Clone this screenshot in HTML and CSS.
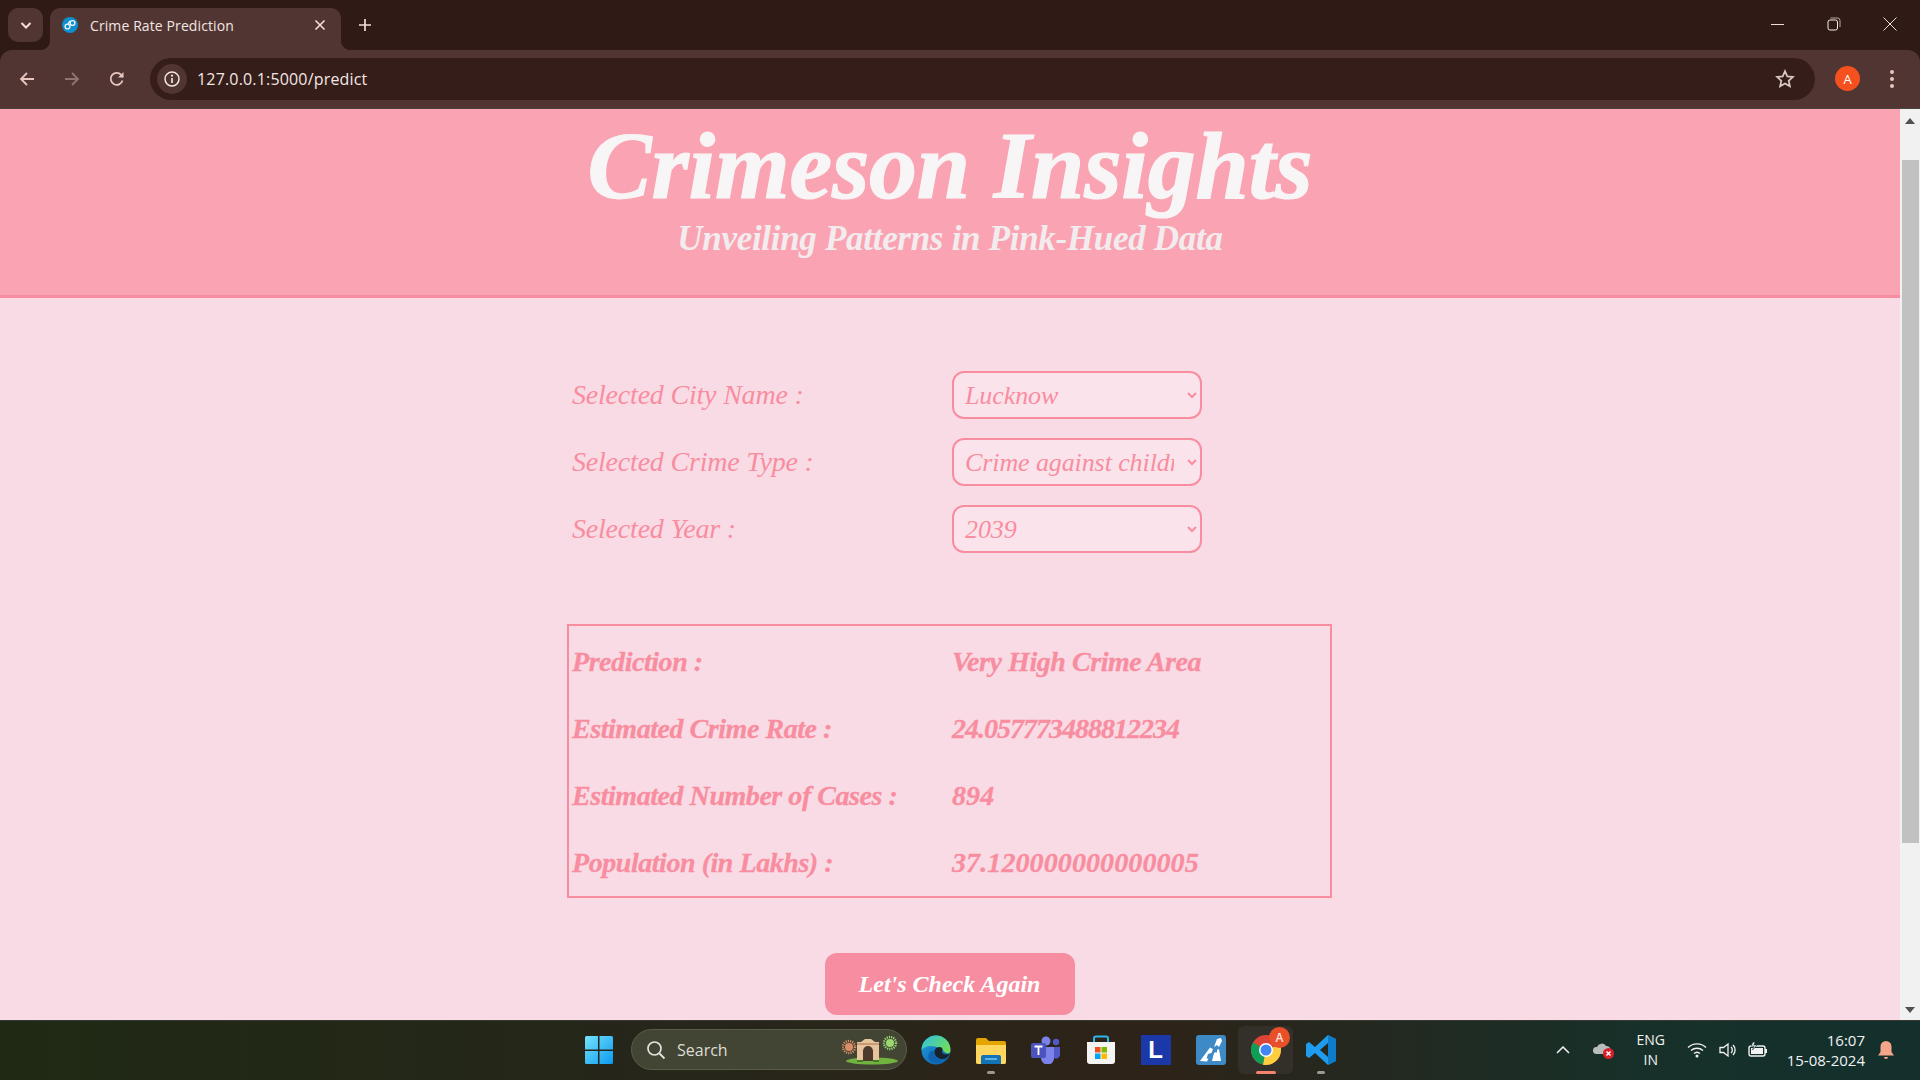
FILE: index.html
```html
<!DOCTYPE html>
<html lang="en">
<head>
    <meta charset="UTF-8">
    <meta name="viewport" content="width=device-width, initial-scale=1.0">
    <title>Crime Rate Prediction</title>
    <link rel="stylesheet" href="styles.css">
</head>
<body>
    <!-- browser tabs -->
    <div class="tabbar">
        <div class="tab-search">
            <svg width="14" height="14" viewBox="0 0 14 14"><path d="M2.5 5l4.5 4.5L11.5 5" fill="none" stroke="#f3dedb" stroke-width="2"/></svg>
        </div>
        <div class="tab">
            <svg class="favicon" width="16" height="16" viewBox="0 0 16 16">
                <circle cx="8" cy="8" r="8" fill="#0d8fd0"/>
                <circle cx="5.5" cy="9.5" r="2.4" fill="none" stroke="#e8f4fa" stroke-width="1.4"/>
                <circle cx="10.5" cy="6" r="2.4" fill="none" stroke="#e8f4fa" stroke-width="1.4"/>
                <path d="M6 7l2-3" stroke="#e8f4fa" stroke-width="1.4"/>
            </svg>
            <span class="tab-title">Crime Rate Prediction</span>
            <svg class="tab-close" width="12" height="12" viewBox="0 0 12 12"><path d="M1.5 1.5l9 9M10.5 1.5l-9 9" stroke="#f3dedb" stroke-width="1.6"/></svg>
        </div>
        <svg class="new-tab" width="14" height="14" viewBox="0 0 14 14"><path d="M7 1v12M1 7h12" stroke="#f3dedb" stroke-width="1.7"/></svg>
        <div class="win-controls">
            <svg width="14" height="14" viewBox="0 0 14 14"><path d="M0 7.5h13" stroke="#eadedc" stroke-width="1"/></svg>
            <svg width="14" height="14" viewBox="0 0 14 14"><rect x="1" y="3" width="9.5" height="10" rx="2" fill="none" stroke="#f3ecea" stroke-width="1"/><path d="M3.5 1h7a2.5 2.5 0 0 1 2.5 2.5V10" fill="none" stroke="#b9aaa8" stroke-width="1"/></svg>
            <svg width="14" height="14" viewBox="0 0 14 14"><path d="M.5.5l13 13M13.5.5l-13 13" stroke="#eadedc" stroke-width="1"/></svg>
        </div>
    </div>

    <!-- address bar -->
    <div class="toolbar">
        <div class="nav-buttons">
            <svg width="18" height="18" viewBox="0 0 18 18"><path d="M16 9H3M9 3L3 9l6 6" fill="none" stroke="#e9c5bf" stroke-width="1.8"/></svg>
            <svg width="18" height="18" viewBox="0 0 18 18"><path d="M2 9h13M9 3l6 6-6 6" fill="none" stroke="#8f7571" stroke-width="1.8"/></svg>
            <svg width="18" height="18" viewBox="0 0 18 18"><path d="M14.5 10.5A6 6 0 1 1 13 4.6L15 7" fill="none" stroke="#e9c5bf" stroke-width="1.8"/><path d="M15.5 2v5.5H10z" fill="#e9c5bf"/></svg>
        </div>
        <div class="omnibox">
            <div class="site-info">
                <svg width="16" height="16" viewBox="0 0 16 16"><circle cx="8" cy="8" r="7" fill="none" stroke="#f3e6e3" stroke-width="1.5"/><path d="M8 7v5" stroke="#f3e6e3" stroke-width="1.7"/><circle cx="8" cy="4.7" r="1.1" fill="#f3e6e3"/></svg>
            </div>
            <span class="url">127.0.0.1:5000/predict</span>
            <svg class="star" width="20" height="20" viewBox="0 0 20 20"><path d="M10 2.2l2.3 5.2 5.6.6-4.2 3.8 1.2 5.5L10 14.5l-4.9 2.8 1.2-5.5L2.100 8l5.600-.6z" fill="none" stroke="#dcc8c4" stroke-width="1.700"/></svg>
        </div>
        <div class="avatar">A</div>
        <div class="menu-dots"><i></i><i></i><i></i></div>
    </div>

    <!-- page -->
    <div class="viewport">
        <div class="page">
            <header class="site-header">
                <h1>Crimeson Insights</h1>
                <p>Unveiling Patterns in Pink-Hued Data</p>
            </header>
            <main class="container">
                <form class="selected-form">
                    <label>Selected City Name :</label>
                    <select><option>Lucknow</option></select>
                    <label>Selected Crime Type :</label>
                    <select><option>Crime against children</option></select>
                    <label>Selected Year :</label>
                    <select><option>2039</option></select>
                </form>
                <div class="result-box">
                    <span>Prediction :</span><span>Very High Crime Area</span>
                    <span>Estimated Crime Rate :</span><span class="val-rate">24.057773488812234</span>
                    <span>Estimated Number of Cases :</span><span class="val-plain">894</span>
                    <span>Population (in Lakhs) :</span><span class="val-plain">37.120000000000005</span>
                </div>
                <div class="actions">
                    <button type="button" class="again-btn">Let's Check Again</button>
                </div>
            </main>
        </div>
        <div class="scrollbar">
            <svg width="10" height="6" viewBox="0 0 10 6"><path d="M5 0l5 6H0z" fill="#505050"/></svg>
            <div class="scroll-track"><div class="scroll-thumb"></div></div>
            <svg width="10" height="6" viewBox="0 0 10 6"><path d="M5 6l5-6H0z" fill="#505050"/></svg>
        </div>
    </div>

    <!-- windows taskbar -->
    <footer class="taskbar">
        <div class="task-center">
            <svg class="start" width="30" height="30" viewBox="0 0 30 30">
                <defs><linearGradient id="winG" x1="0" y1="0" x2="1" y2="1"><stop offset="0" stop-color="#76e3fb"/><stop offset="1" stop-color="#0a9af0"/></linearGradient></defs>
                <path d="M1 2.500A1.500 1.500 0 0 1 2.500 1H14v13.500H1zM15.500 1H27.500A1.500 1.500 0 0 1 29 2.500V14.500H15.500zM1 16H14v13H2.500A1.500 1.500 0 0 1 1 27.500zM15.500 16H29v11.500a1.500 1.500 0 0 1-1.500 1.500H15.500z" fill="url(#winG)"/>
            </svg>
            <div class="search-pill">
                <svg width="20" height="20" viewBox="0 0 20 20"><circle cx="8.500" cy="8.500" r="6.500" fill="none" stroke="#e4e4de" stroke-width="1.700"/><path d="M13.500 13.500l5 5" stroke="#e4e4de" stroke-width="1.800"/></svg>
                <span>Search</span>
                <svg class="gate" width="56" height="32" viewBox="0 0 56 32">
                    <ellipse cx="30" cy="27" rx="26" ry="3.500" fill="#72b23e"/>
                    <circle cx="7" cy="13" r="4" fill="#d88e66"/>
                    <circle cx="7" cy="13" r="6" fill="none" stroke="#d88e66" stroke-width="2.400" stroke-dasharray="1.200 1"/>
                    <circle cx="48" cy="9" r="4" fill="#9bd873"/>
                    <circle cx="48" cy="9" r="6" fill="none" stroke="#9bd873" stroke-width="2.400" stroke-dasharray="1.200 1"/>
                    <path d="M15 8h4l4-3h6l4 3h4v19H15z" fill="#e8c49c"/>
                    <path d="M21 27V17a5 5 0 0 1 10 0v10z" fill="#4c3a2c"/>
                    <path d="M15 9h22v2H15z" fill="#c99b72"/>
                    <path d="M15 26h6v2h-6zM31 26h6v2h-6z" fill="#3f7f2a"/>
                </svg>
            </div>
            <div class="task-icon">
                <svg width="30" height="30" viewBox="0 0 30 30">
                    <defs>
                        <linearGradient id="edgeG" x1="0" y1="0" x2="1" y2="1"><stop offset="0" stop-color="#1f9fe0"/><stop offset="1" stop-color="#0c5aa6"/></linearGradient>
                        <linearGradient id="edgeT" x1="0" y1="0" x2="1" y2=".6"><stop offset="0" stop-color="#2cc0e8"/><stop offset="1" stop-color="#6fdc5c"/></linearGradient>
                    </defs>
                    <circle cx="15" cy="15" r="14.500" fill="url(#edgeG)"/>
                    <path d="M.5 15A14.500 14.500 0 0 1 29.500 15c0 2-.8 3.500-2.500 3.500-3 0-5-4-8.500-5.500C12 10 5 10 .5 15z" fill="url(#edgeT)"/>
                    <path d="M29 18c-2 2-5 1.500-7 .5-1-.5-1.500-2-.5-3 .5-1.500-.5-3.500-3-3.500-3.500 0-5.500 3-5 6 .5 3.500 4 6 8 6 3 0 6-2 7.500-6z" fill="#19222a"/>
                    <path d="M13 17c-.5 4 4 8 8.500 7.500-2 2.500-6 4-10 3C7 26 6 21 9 17c1-1.500 3.500-2 4 0z" fill="#0d63b0"/>
                </svg>
            </div>
            <div class="task-icon running">
                <svg width="30" height="28" viewBox="0 0 30 28">
                    <path d="M0 4a2 2 0 0 1 2-2h8l3 3h15a2 2 0 0 1 2 2v19a2 2 0 0 1-2 2H2a2 2 0 0 1-2-2z" fill="#e5a500"/>
                    <path d="M0 9h30v17a2 2 0 0 1-2 2H2a2 2 0 0 1-2-2z" fill="#ffd75e"/>
                    <path d="M5 21a2 2 0 0 1 2-2h16a2 2 0 0 1 2 2v7H5z" fill="#1273b8"/>
                    <path d="M9 23h12" stroke="#7cc4ee" stroke-width="1.500"/>
                </svg>
            </div>
            <div class="task-icon">
                <svg width="30" height="28" viewBox="0 0 30 28">
                    <circle cx="15" cy="5" r="4.500" fill="#7b83eb"/>
                    <circle cx="25" cy="6" r="3.200" fill="#5059c9"/>
                    <path d="M21 11h8v8a4 4 0 0 1-6 3z" fill="#5059c9"/>
                    <path d="M9 11h14v10a6.500 6.500 0 0 1-13 2z" fill="#7b83eb"/>
                    <rect x="0" y="7" width="15" height="15" rx="2" fill="#4b53bc"/>
                    <path d="M3.500 10.500h8M7.500 10.500v8.500" stroke="#fff" stroke-width="1.800"/>
                </svg>
            </div>
            <div class="task-icon">
                <svg width="30" height="30" viewBox="0 0 30 30">
                    <path d="M8 8V3.500a2 2 0 0 1 2-2h10a2 2 0 0 1 2 2V8" fill="none" stroke="#2bb8ea" stroke-width="2"/>
                    <path d="M1 7h28v19a3 3 0 0 1-3 3H4a3 3 0 0 1-3-3z" fill="#f4f4f2"/>
                    <rect x="9" y="12" width="5.500" height="5.500" fill="#f25022"/>
                    <rect x="15.500" y="12" width="5.500" height="5.500" fill="#7fba00"/>
                    <rect x="9" y="18.500" width="5.500" height="5.500" fill="#00a4ef"/>
                    <rect x="15.500" y="18.500" width="5.500" height="5.500" fill="#ffb900"/>
                </svg>
            </div>
            <div class="task-icon">
                <div class="l-tile">L</div>
            </div>
            <div class="task-icon">
                <svg width="30" height="30" viewBox="0 0 30 30">
                    <rect width="30" height="30" rx="3" fill="#3d8ac7"/>
                    <path d="M4 26L14 12.500l3 1.500-1.500 4-3.500 1-1.500 4.500 2 0-1.500 3zM16 26l2-8 2-1 1 1v8zM21 26V15l2-1 2 12zM18 12l3-8 4-1 1 3-3 6-2-2z" fill="#fff"/>
                </svg>
            </div>
            <div class="task-icon active">
                <svg width="30" height="30" viewBox="0 0 30 30">
                    <circle cx="15" cy="15" r="15" fill="#db4437"/>
                    <path d="M15 15L2 7.500A15 15 0 0 0 12 29.700z" fill="#0f9d58"/>
                    <path d="M15 15l-3 14.700A15 15 0 0 0 30 15c0-2-.4-4-1-5.500z" fill="#ffcd40"/>
                    <circle cx="15" cy="15" r="7" fill="#fff"/>
                    <circle cx="15" cy="15" r="5.500" fill="#4285f4"/>
                </svg>
                <div class="chrome-badge">A</div>
            </div>
            <div class="task-icon running">
                <svg width="30" height="30" viewBox="0 0 30 30">
                    <path d="M22 0l8 4v22l-8 4-13-12-6 5-3-2V9l3-2 6 5zM22 8l-8 7 8 7z" fill="#1f9cf0" fill-rule="evenodd"/>
                    <path d="M22 0l8 4v22l-8 4z" fill="#0065a9" opacity=".55"/>
                </svg>
            </div>
        </div>
        <div class="tray">
            <svg width="14" height="8" viewBox="0 0 14 8"><path d="M1 7l6-6 6 6" fill="none" stroke="#f2f2f2" stroke-width="1.500"/></svg>
            <svg class="onedrive" width="22" height="20" viewBox="0 0 22 20"><path d="M3 14a3.500 3.500 0 0 1 1-7 5 5 0 0 1 9-1 4 4 0 0 1 4 6l-2 2z" fill="#b9bcbc"/><circle cx="15.500" cy="13.500" r="5.500" fill="#d8202c"/><path d="M13.500 11.500l4 4M17.500 11.500l-4 4" stroke="#fff" stroke-width="1.400"/></svg>
            <div class="lang">ENG<br>IN</div>
            <svg width="20" height="16" viewBox="0 0 20 16"><path d="M1 5.500a13 13 0 0 1 18 0M4 8.500a9 9 0 0 1 12 0M7 11.500a4.500 4.500 0 0 1 6 0" fill="none" stroke="#f2f2f2" stroke-width="1.400"/><circle cx="10" cy="14" r="1.500" fill="#f2f2f2"/></svg>
            <svg class="volume" width="20" height="16" viewBox="0 0 20 16"><path d="M1 5.500h3.500L9 2v12L4.500 10.500H1z" fill="none" stroke="#f2f2f2" stroke-width="1.300"/><path d="M12 5a4 4 0 0 1 0 6M14 3a7 7 0 0 1 0 10" fill="none" stroke="#f2f2f2" stroke-width="1.300"/></svg>
            <svg width="20" height="16" viewBox="0 0 20 16"><rect x="1" y="4" width="16" height="10" rx="2" fill="none" stroke="#f2f2f2" stroke-width="1.400"/><rect x="3" y="6" width="12" height="6" fill="#f2f2f2"/><path d="M18 7v4" stroke="#f2f2f2" stroke-width="2"/><path d="M5 0L3 4h3L4.500 8 9 3H6l1-3z" fill="#f2f2f2" stroke="#13302d" stroke-width=".6"/></svg>
            <div class="clock"><span>16:07</span><span>15-08-2024</span></div>
            <svg width="18" height="20" viewBox="0 0 18 20"><path d="M9 1a5.500 5.500 0 0 1 5.500 5.500V12l2.500 3.500H1L3.500 12V6.500A5.500 5.500 0 0 1 9 1z" fill="#f6a58a"/><path d="M7 17h4a2 2 0 0 1-4 0z" fill="#f6a58a"/></svg>
        </div>
    </footer>
</body>
</html>
```

FILE: styles.css
```css
* {
    box-sizing: border-box;
}
html, body {
    margin: 0;
    height: 100%;
    overflow: hidden;
}
body {
    display: flex;
    flex-direction: column;
    width: 1920px;
    height: 1080px;
    background: #301a16;
    font-family: "Open Sans", "Noto Sans", sans-serif;
}

/* tab strip */
.tabbar {
    display: flex;
    align-items: flex-end;
    height: 50px;
    flex: none;
    padding-left: 8px;
    background: #301a16;
    color: #f3e6e3;
}
.tab-search {
    display: flex;
    align-items: center;
    justify-content: center;
    width: 35px;
    height: 34px;
    margin-bottom: 8px;
    border-radius: 10px;
    background: #513532;
}
.tab {
    position: relative;
    display: flex;
    align-items: center;
    width: 291px;
    height: 42px;
    margin-left: 7px;
    padding: 0 12px 8px;
    border-radius: 10px 10px 0 0;
    background: #513532;
}
.tab::before, .tab::after {
    content: "";
    position: absolute;
    bottom: 0;
    width: 10px;
    height: 10px;
}
.tab::before {
    left: -10px;
    background: radial-gradient(circle at 0 0, #301a16 10px, #513532 10.500px);
}
.tab::after {
    right: -10px;
    background: radial-gradient(circle at 100% 0, #301a16 10px, #513532 10.500px);
}
.favicon {
    margin-right: 12px;
}
.tab-title {
    flex: 1;
    font-size: 14px;
    letter-spacing: .1px;
}
.tab-close {
    margin-right: 3px;
}
.new-tab {
    margin: 0 0 18px 17px;
}
.win-controls {
    display: flex;
    gap: 42px;
    margin: 0 23px 19px auto;
}

/* address bar */
.toolbar {
    display: flex;
    align-items: center;
    height: 59px;
    flex: none;
    padding: 0 0 1px 18px;
    border-radius: 12px 12px 0 0;
    border-bottom: 1px solid #4a4340;
    background: #513532;
}
.nav-buttons {
    display: flex;
    gap: 27px;
    width: 132px;
}
.omnibox {
    display: flex;
    align-items: center;
    width: 1665px;
    height: 42px;
    padding: 0 20px 0 7px;
    border-radius: 21px;
    background: #351d1a;
}
.site-info {
    display: flex;
    align-items: center;
    justify-content: center;
    width: 30px;
    height: 30px;
    border-radius: 50%;
    background: #513532;
}
.url {
    flex: 1;
    margin-left: 10px;
    font-size: 16px;
    letter-spacing: .17px;
    color: #f3e6e3;
}
.avatar {
    display: flex;
    align-items: center;
    justify-content: center;
    width: 25px;
    height: 25px;
    margin-left: 20px;
    border-radius: 50%;
    background: #f4511e;
    color: #fff;
    font-size: 13px;
}
.menu-dots {
    display: flex;
    flex-direction: column;
    gap: 3px;
    margin-left: 30px;
}
.menu-dots i {
    width: 4px;
    height: 4px;
    border-radius: 50%;
    background: #e9c5bf;
}

/* the page itself */
.viewport {
    display: flex;
    height: 911px;
    flex: none;
    overflow: hidden;
}
.page {
    width: 1900px;
    height: 911px;
    overflow: hidden;
    background: #f9dbe5;
    font-family: "Liberation Serif", serif;
    font-style: italic;
    color: #f88da0;
}
.site-header {
    height: 189px;
    text-align: center;
    background: #faa4b3;
    border-bottom: 3px solid #f78da0;
}
.site-header h1 {
    margin: 0;
    font-size: 96px;
    line-height: 113px;
    letter-spacing: -.2px;
    font-weight: 700;
    color: #f8f5f6;
    -webkit-text-stroke: 1.2px #f8f5f6;
}
.site-header p {
    margin: 0;
    font-size: 35px;
    line-height: 34px;
    letter-spacing: -.3px;
    font-weight: 700;
    color: #f3ecee;
}
.container {
    width: 765px;
    margin-left: 567px;
}
.selected-form {
    display: grid;
    grid-template-columns: 380px 250px;
    row-gap: 19px;
    align-items: center;
    margin-top: 73px;
    padding-left: 5px;
}
.selected-form label {
    font-size: 28px;
    letter-spacing: -.2px;
}
.selected-form select {
    height: 48px;
    padding: 0 10px 0 7px;
    border: 2px solid #f88da0;
    border-radius: 12px;
    outline: none;
    background: #fbe3eb;
    color: #f88da0;
    font-family: "Liberation Serif", serif;
    font-style: italic;
    font-size: 26px;
    letter-spacing: -.1px;
}
.result-box {
    display: grid;
    grid-template-columns: 380px 1fr;
    grid-auto-rows: 67px;
    align-items: center;
    height: 274px;
    margin-top: 71px;
    padding: 2px 0 0 3px;
    border: 2px solid #f88da0;
    font-size: 28px;
    font-weight: 700;
    letter-spacing: -.45px;
    -webkit-text-stroke: .3px #f88da0;
}
.result-box .val-rate {
    letter-spacing: -1px;
}
.result-box .val-plain {
    letter-spacing: .1px;
}
.actions {
    display: flex;
    justify-content: center;
    margin-top: 55px;
}
.again-btn {
    width: 250px;
    height: 62px;
    border: none;
    border-radius: 12px;
    background: #f78da0;
    color: #fff;
    font-family: "Liberation Serif", serif;
    font-style: italic;
    font-weight: 700;
    font-size: 24px;
}

/* scrollbar */
.scrollbar {
    display: flex;
    flex-direction: column;
    align-items: center;
    width: 20px;
    padding: 9px 0 7px;
    background: #f1f1f1;
}
.scroll-track {
    flex: 1;
    width: 100%;
    padding-top: 36px;
}
.scroll-thumb {
    width: 17px;
    height: 683px;
    margin: 0 auto;
    background: #c1c1c1;
}

/* taskbar */
.taskbar {
    display: flex;
    align-items: center;
    height: 61px;
    flex: none;
    padding: 0 25px 3px 584px;
    border-top: 1px solid #3a3a34;
    background: linear-gradient(90deg, #1f2a14 0%, #26261a 35%, #2e2318 60%, #173029 85%, #13302d 100%);
    color: #f2f2f2;
}
.task-center {
    display: flex;
    align-items: center;
}
.start {
    margin-right: 17px;
}
.search-pill {
    display: flex;
    align-items: center;
    width: 276px;
    height: 41px;
    padding: 0 8px 0 14px;
    border-radius: 21px;
    border: 1px solid #5a5c4a;
    background: #434534;
    color: #dcdcd6;
    font-size: 16px;
}
.search-pill span {
    flex: 1;
    margin-left: 11px;
}
.task-icon {
    position: relative;
    display: flex;
    align-items: center;
    justify-content: center;
    width: 55px;
    height: 48px;
}
.search-pill + .task-icon {
    margin-left: 1px;
}
.task-icon.running::after, .task-icon.active::after {
    content: "";
    position: absolute;
    bottom: 0;
    left: 50%;
    width: 8px;
    height: 3px;
    margin-left: -4px;
    border-radius: 2px;
    background: #9a9a92;
}
.task-icon.active {
    border-radius: 6px;
    background: #33302a;
    box-shadow: 4px 0 0 #28261f;
}
.task-icon.active::after {
    width: 20px;
    margin-left: -10px;
    background: #f4846f;
}
.l-tile {
    width: 30px;
    height: 30px;
    background: #1a38a8;
    color: #fff;
    font-family: "Liberation Sans", sans-serif;
    font-weight: 700;
    font-size: 24px;
    line-height: 30px;
    text-align: center;
}
.chrome-badge {
    position: absolute;
    top: 1px;
    right: 3px;
    width: 21px;
    height: 21px;
    border-radius: 50%;
    background: #e8502a;
    color: #fbe0d8;
    font-size: 12px;
    font-weight: 600;
    line-height: 21px;
    text-align: center;
}
.tray {
    display: flex;
    align-items: center;
    margin-left: auto;
}
.lang {
    width: 50px;
    margin: 0 11px 0 11px;
    font-size: 14px;
    line-height: 20px;
    text-align: center;
}
.tray svg + svg {
    margin-left: 9px;
}
.tray svg.onedrive {
    margin-left: 23px;
}
.tray svg.volume {
    margin-left: 12px;
}
.clock {
    display: flex;
    flex-direction: column;
    align-items: flex-end;
    margin: 0 12px 0 19px;
    font-size: 15px;
    line-height: 20px;
}
```
